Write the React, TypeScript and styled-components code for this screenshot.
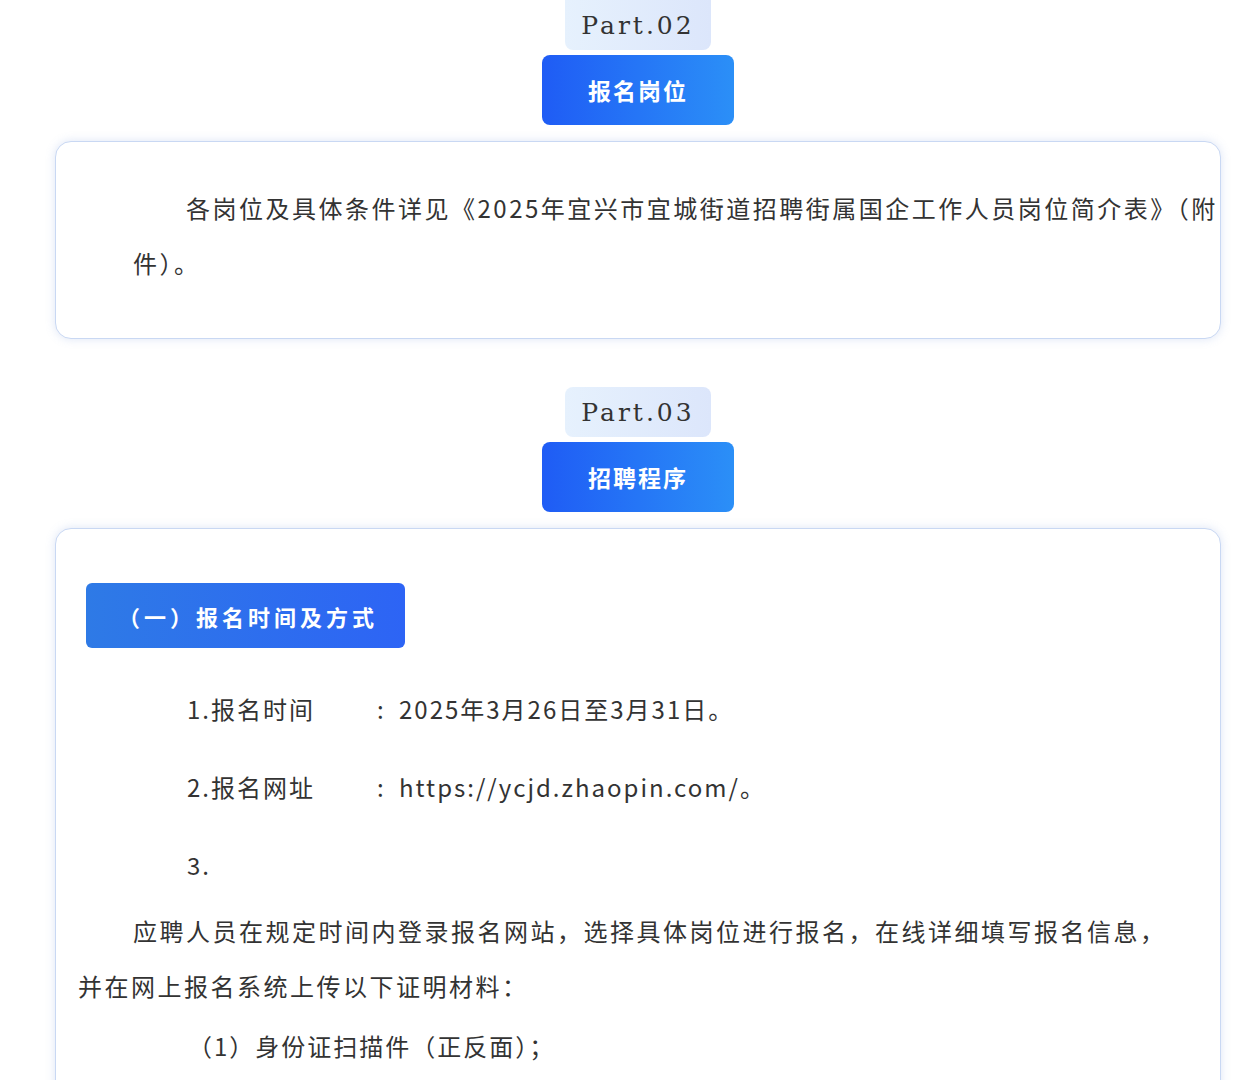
import React from "react";
import styled, { createGlobalStyle } from "styled-components";

const G = createGlobalStyle`
  body { margin: 0; background: #fff; overflow-x: hidden; font-family: "Noto Sans CJK SC", "Noto Sans", sans-serif; color: #333; }
`;
const Page = styled.div`width: 1252px; display: flex; flex-direction: column; align-items: flex-start;`;
const Head = styled.div`display: flex; flex-direction: column; align-items: center; margin-left: 542px; margin-top: ${p => p.$top}px;`;
const Tab = styled.div`
  width: 146px; height: 50px; border-radius: 0 0 8px 8px; ${p => p.$round && "border-radius: 8px;"}
  background: linear-gradient(90deg, #e6f1fd, #dce6fb);
  display: flex; align-items: center; justify-content: center;
  font-family: "DejaVu Serif", "Liberation Serif", serif; font-size: 25px; letter-spacing: 3px; color: #333;
`;
const Btn = styled.div`
  margin-top: 5px; width: 192px; height: 70px; border-radius: 8px;
  background: linear-gradient(90deg, #1f5cf5, #2b8ff7);
  display: flex; align-items: center; justify-content: center;
  color: #fff; font-size: 23px; font-weight: 600; letter-spacing: 2px;
`;
const Card = styled.div`
  margin-top: 16px; width: 1166px; margin-left: 55px; box-sizing: border-box;
  border: 1.5px solid #c9d8f3; border-radius: 16px; background: #fff;
  box-shadow: 0 0 10px rgba(120,150,220,0.25);
  padding: ${p => p.$pad};
`;
const Para = styled.p`
  margin: 0; width: ${p => p.$w}px; margin-left: ${p => p.$ml}px; text-indent: ${p => p.$ind}px;
  font-size: 24px; letter-spacing: 2.5px; line-height: 55px; color: #333;
`;
const Pill = styled.div`
  width: 319px; height: 65px; border-radius: 6px; margin-left: 30px;
  background: linear-gradient(90deg, #2e7ae6, #2d64f5);
  display: flex; align-items: center; padding-left: 32px; box-sizing: border-box;
  color: #fff; font-size: 22px; font-weight: 600; letter-spacing: 4px;
`;
const Spacer = styled.div`height: 21px;`;
const Row = styled.div`display: flex; margin-left: 131px; font-size: 24px; letter-spacing: 2px; color: #333; height: 78px; align-items: center;`;
const Label = styled.span`width: 190px;`;
const Colon = styled.span`width: 22px;`;
const Item = styled.div`margin-left: 132px; font-size: 24px; letter-spacing: 2px; height: 64px; display: flex; align-items: center;`;

export default function App() {
  return (
    <Page>
      <G />
      <Head $top={0}>
        <Tab>Part.02</Tab>
        <Btn>报名岗位</Btn>
      </Head>
      <Card $pad="38px 0 48px 0">
        <Para $w={1120} $ml={77} $ind={53}>各岗位及具体条件详见《2025年宜兴市宜城街道招聘街属国企工作人员岗位简介表》（附件）。</Para>
      </Card>
      <Head $top={48}>
        <Tab $round>Part.03</Tab>
        <Btn>招聘程序</Btn>
      </Head>
      <Card $pad="54px 0 40px 0">
        <Pill>（一）报名时间及方式</Pill>
        <Spacer />
        <Row><Label>1.报名时间</Label><Colon>:</Colon><span>2025年3月26日至3月31日。</span></Row>
        <Row><Label>2.报名网址</Label><Colon>:</Colon><span>https://ycjd.zhaopin.com/。</span></Row>
        <Row><Label>3.</Label></Row>
        <Para $w={1100} $ml={22} $ind={55}>应聘人员在规定时间内登录报名网站，选择具体岗位进行报名，在线详细填写报名信息，并在网上报名系统上传以下证明材料：</Para>
        <Item>（1）身份证扫描件（正反面）；</Item>
      </Card>
    </Page>
  );
}
